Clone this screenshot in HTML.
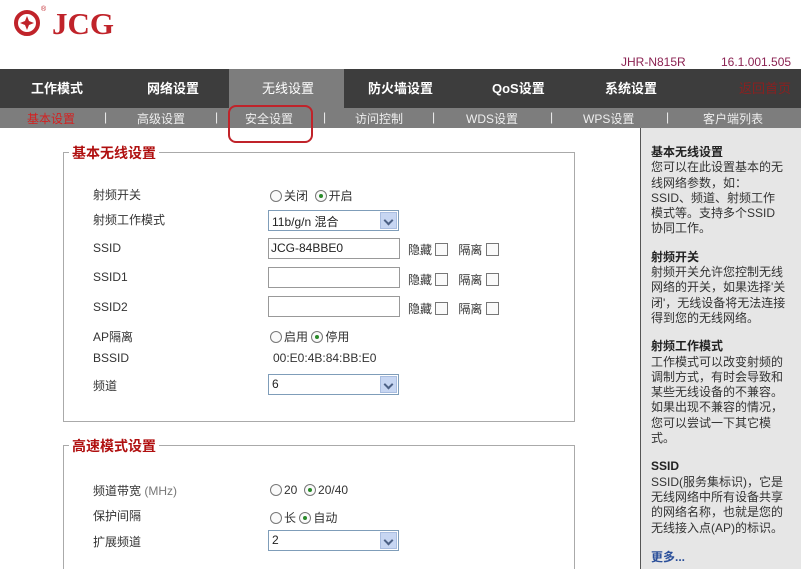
<!DOCTYPE html>
<html><head><meta charset="utf-8"><style>
*{margin:0;padding:0;box-sizing:border-box}
html,body{width:801px;height:569px;overflow:hidden}
body{position:relative;background:#fff;font-family:"Liberation Sans","Noto Sans CJK SC",sans-serif;font-size:12px;color:#333}
.a{position:absolute;white-space:nowrap}
.nav{position:absolute;top:69px;left:0;width:801px;height:39px;background:#3d3d3d}
.nav span{position:absolute;top:9px;color:#fff;font-weight:bold;font-size:13px}
.sub{position:absolute;top:108px;left:0;width:801px;height:20px;background:#7d7d7d}
.sub span{position:absolute;top:2px;color:#eee;font-size:12px}
.side{position:absolute;left:640px;top:128px;width:161px;height:441px;background:#e6e6e6;border-left:1px solid #555;overflow:hidden}
.fs{position:absolute;border:1px solid #aaa}
.lg{position:absolute;background:#fff;color:#b01010;font-weight:bold;font-size:14px;padding:0 3px}
.inp{position:absolute;left:268px;width:132px;height:21px;border:1px solid #999;background:#fff;padding:2px 2px;font-size:12px;color:#222}
.sel{position:absolute;left:268px;width:131px;height:21px;border:1px solid #7f9db9;background:#fff;padding:2px 3px;font-size:12px;color:#222}
.sel i{position:absolute;right:1px;top:1px;width:17px;height:17px;background:#c7d6f2;border:1px solid #a9bde0}
.sel i:after{content:"";position:absolute;left:4px;top:4px;width:5px;height:5px;border-right:2px solid #4d6185;border-bottom:2px solid #4d6185;transform:rotate(45deg)}
.r{display:inline-block;width:12px;height:12px;border:1px solid #777;border-radius:50%;vertical-align:-2px;margin-right:2px;position:relative;background:#fafafa}
.r.on:after{content:"";position:absolute;left:3px;top:3px;width:4px;height:4px;border-radius:50%;background:#2a8a2a}
.cb{display:inline-block;width:13px;height:13px;border:1px solid #777;vertical-align:-2px;background:#fafafa}
.side p{font-size:12px;line-height:15.3px;color:#333;margin-left:10px}
.side b{display:block;font-size:12px;color:#222}
</style></head><body>
<svg class="a" style="left:14px;top:9px" width="30" height="28" viewBox="0 0 30 28"><circle cx="13" cy="14" r="11" fill="none" stroke="#c0232a" stroke-width="4"/><path d="M13 7 L15 12 L20 14 L15 16 L13 21 L11 16 L6 14 L11 12Z" fill="#c0232a"/></svg>
<div class="a" style="left:41px;top:6px;font-size:7px;color:#c0232a">®</div>
<div class="a" style="left:52px;top:6px;font-family:'Liberation Serif',serif;font-weight:bold;font-size:31px;color:#c0232a">JCG</div>
<div class="a" style="left:621px;top:55px;color:#8b2252;font-size:12px">JHR-N815R</div>
<div class="a" style="left:721px;top:55px;color:#8b2252;font-size:12px">16.1.001.505</div>
<div class="nav">
<div style="position:absolute;left:229px;top:0;width:115px;height:39px;background:#7d7d7d"></div>
<span style="left:31px">工作模式</span><span style="left:147px">网络设置</span><span style="left:262px;font-weight:normal">无线设置</span><span style="left:368px">防火墙设置</span><span style="left:492px">QoS设置</span><span style="left:605px">系统设置</span><span style="left:739px;color:#8a2020;font-weight:normal">返回首页</span>
</div>
<div class="sub">
<span style="left:27px;color:#d42020">基本设置</span><span style="left:104px">|</span><span style="left:137px">高级设置</span><span style="left:215px">|</span><span style="left:245px">安全设置</span><span style="left:323px">|</span><span style="left:355px">访问控制</span><span style="left:432px">|</span><span style="left:466px">WDS设置</span><span style="left:550px">|</span><span style="left:583px">WPS设置</span><span style="left:666px">|</span><span style="left:703px">客户端列表</span>
</div>
<div class="a" style="left:228px;top:105px;width:85px;height:38px;border:2px solid #c0232a;border-radius:8px"></div>
<div class="side">
<p style="margin-top:17px"><b>基本无线设置</b>您可以在此设置基本的无<br>线网络参数，如：<br>SSID、频道、射频工作<br>模式等。支持多个SSID<br>协同工作。</p>
<p style="margin-top:13px"><b>射频开关</b>射频开关允许您控制无线<br>网络的开关，如果选择'关<br>闭'，无线设备将无法连接<br>得到您的无线网络。</p>
<p style="margin-top:13px"><b>射频工作模式</b>工作模式可以改变射频的<br>调制方式，有时会导致和<br>某些无线设备的不兼容。<br>如果出现不兼容的情况，<br>您可以尝试一下其它模<br>式。</p>
<p style="margin-top:13px"><b>SSID</b>SSID(服务集标识)，它是<br>无线网络中所有设备共享<br>的网络名称，也就是您的<br>无线接入点(AP)的标识。</p>
<p style="margin-top:14px;color:#2a4f9a;font-weight:bold">更多...</p>
</div>
<div class="fs" style="left:63px;top:152px;width:512px;height:270px"></div>
<div class="lg" style="left:69px;top:143px">基本无线设置</div>
<div class="a" style="left:93px;top:186px">射频开关</div>
<div class="a" style="left:270px;top:187px"><span class="r"></span>关闭 &nbsp;<span class="r on"></span>开启</div>
<div class="a" style="left:93px;top:211px">射频工作模式</div>
<div class="sel" style="top:210px">11b/g/n 混合<i></i></div>
<div class="a" style="left:93px;top:241px">SSID</div>
<div class="inp" style="top:238px">JCG-84BBE0</div>
<div class="a" style="left:408px;top:241px">隐藏 <span class="cb"></span> &nbsp;&nbsp;隔离 <span class="cb"></span></div>
<div class="a" style="left:93px;top:270px">SSID1</div>
<div class="inp" style="top:267px"></div>
<div class="a" style="left:408px;top:271px">隐藏 <span class="cb"></span> &nbsp;&nbsp;隔离 <span class="cb"></span></div>
<div class="a" style="left:93px;top:300px">SSID2</div>
<div class="inp" style="top:296px"></div>
<div class="a" style="left:408px;top:300px">隐藏 <span class="cb"></span> &nbsp;&nbsp;隔离 <span class="cb"></span></div>
<div class="a" style="left:93px;top:328px">AP隔离</div>
<div class="a" style="left:270px;top:328px"><span class="r"></span>启用 <span class="r on"></span>停用</div>
<div class="a" style="left:93px;top:351px">BSSID</div>
<div class="a" style="left:273px;top:351px">00:E0:4B:84:BB:E0</div>
<div class="a" style="left:93px;top:377px">频道</div>
<div class="sel" style="top:374px">6<i></i></div>
<div class="fs" style="left:63px;top:445px;width:512px;height:140px"></div>
<div class="lg" style="left:69px;top:436px">高速模式设置</div>
<div class="a" style="left:93px;top:482px">频道带宽 <span style="color:#777">(MHz)</span></div>
<div class="a" style="left:270px;top:483px"><span class="r"></span>20 &nbsp;<span class="r on"></span>20/40</div>
<div class="a" style="left:93px;top:507px">保护间隔</div>
<div class="a" style="left:270px;top:509px"><span class="r"></span>长 <span class="r on"></span>自动</div>
<div class="a" style="left:93px;top:533px">扩展频道</div>
<div class="sel" style="top:530px">2<i></i></div>
</body></html>
